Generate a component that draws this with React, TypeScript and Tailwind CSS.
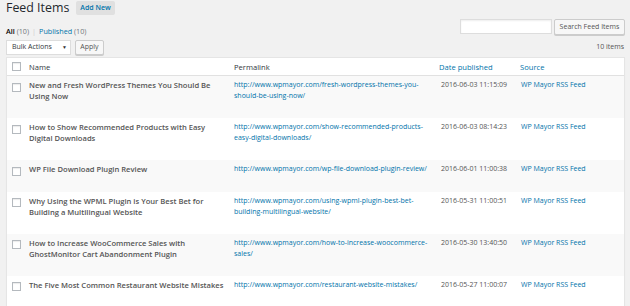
import React from 'react';

interface FeedItem {
  title: string[];
  link: string[];
  date: string;
}

const items: FeedItem[] = [
  {
    title: ['New and Fresh WordPress Themes You Should Be', 'Using Now'],
    link: ['http://www.wpmayor.com/fresh-wordpress-themes-you-', 'should-be-using-now/'],
    date: '2016-06-03 11:15:09',
  },
  {
    title: ['How to Show Recommended Products with Easy', 'Digital Downloads'],
    link: ['http://www.wpmayor.com/show-recommended-products-', 'easy-digital-downloads/'],
    date: '2016-06-03 08:14:23',
  },
  {
    title: ['WP File Download Plugin Review'],
    link: ['http://www.wpmayor.com/wp-file-download-plugin-review/'],
    date: '2016-06-01 11:00:38',
  },
  {
    title: ['Why Using the WPML Plugin is Your Best Bet for', 'Building a Multilingual Website'],
    link: ['http://www.wpmayor.com/using-wpml-plugin-best-bet-', 'building-multilingual-website/'],
    date: '2016-05-31 11:00:51',
  },
  {
    title: ['How to Increase WooCommerce Sales with', 'GhostMonitor Cart Abandonment Plugin'],
    link: ['http://www.wpmayor.com/how-to-increase-woocommerce-', 'sales/'],
    date: '2016-05-30 13:40:50',
  },
  {
    title: ['The Five Most Common Restaurant Website Mistakes'],
    link: ['http://www.wpmayor.com/restaurant-website-mistakes/'],
    date: '2016-05-27 11:00:07',
  },
];

const Checkbox: React.FC = () => (
  <span className="block w-[9px] h-[9px] bg-white border border-[#b4b9be] shadow-[inset_0_1px_1px_rgba(0,0,0,0.08)]" />
);

const Lines: React.FC<{ lines: string[] }> = ({ lines }) => (
  <>
    {lines.map((l, i) => (
      <div key={i} className="whitespace-nowrap">
        {l}
      </div>
    ))}
  </>
);

export default function App() {
  return (
    <div
      className="w-[630px] h-[306px] overflow-hidden bg-[#f1f1f1] pl-[6px] pr-[5px] text-[#444]"
      style={{ fontFamily: '"Open Sans", "Liberation Sans", sans-serif' }}
    >
      {/* Title */}
      <div className="flex items-start h-[19px]">
        <h1 className="text-[12.4px] leading-[16px] font-normal text-[#23282d]">Feed Items</h1>
        <span className="ml-[7px] mt-[1px] h-[14px] px-[4px] flex items-center rounded-[2px] bg-[#e0e0e0] text-[#0073aa] text-[7px] font-semibold">
          Add New
        </span>
      </div>

      {/* Views + search */}
      <div className="flex justify-between items-start h-[21px]">
        <div className="mt-[7px] text-[7.2px] leading-[10px] text-[#555]">
          <span className="font-semibold text-black">All</span> <span className="text-[#72777c]">(10)</span>
          <span className="text-[#ccc] mx-[3px]">|</span>
          <span className="text-[#0073aa]">Published</span> <span className="text-[#72777c]">(10)</span>
        </div>
        <div className="flex items-start">
          <span className="block w-[92px] h-[15px] bg-white border border-[#ddd] shadow-[inset_0_1px_2px_rgba(0,0,0,0.07)]" />
          <span className="ml-[2px] h-[16px] w-[71px] flex items-center justify-center rounded-[2px] bg-[#f7f7f7] border border-[#ccc] shadow-[0_1px_0_#ccc] text-[7px] text-[#555]">
            Search Feed Items
          </span>
        </div>
      </div>

      {/* Bulk actions */}
      <div className="flex items-center h-[15px]">
        <span className="w-[65px] h-[15px] flex items-center justify-between bg-white border border-[#ddd] pl-[5px] pr-[3px] text-[7px] text-[#32373c]">
          Bulk Actions
          <span className="text-[5px] text-[#333]">▼</span>
        </span>
        <span className="ml-[4px] w-[29px] h-[15px] flex items-center justify-center rounded-[2px] bg-[#f7f7f7] border border-[#ccc] shadow-[0_1px_0_#ccc] text-[7px] text-[#555]">
          Apply
        </span>
        <span className="ml-auto mr-[1px] text-[7px] text-[#555]">10 items</span>
      </div>

      {/* Table */}
      <div className="mt-[2px] bg-white border border-[#e5e5e5] shadow-[0_1px_1px_rgba(0,0,0,0.04)]">
        <div className="flex h-[18px] border-b border-[#e1e1e1] text-[7.6px] leading-[10.6px]">
          <div className="w-[16px] pl-[5px] pt-[4px]">
            <Checkbox />
          </div>
          <div className="w-[205px] pl-[6px] pt-[4px] text-[#32373c]">Name</div>
          <div className="w-[205px] pl-[6px] pt-[4px] text-[#32373c]">Permalink</div>
          <div className="w-[81px] pl-[6px] pt-[4px] text-[#0073aa]">Date published</div>
          <div className="flex-1 pl-[6px] pt-[4px] text-[#0073aa]">Source</div>
        </div>

        {items.map((item, i) => (
          <div key={i} className={`flex ${i % 2 === 0 ? 'bg-[#f9f9f9]' : 'bg-white'}`}>
            <div className="w-[16px] pl-[5px] pt-[6.5px]">
              <Checkbox />
            </div>
            <div className="w-[205px] pl-[6px] pt-[4.3px] pb-[4.3px]">
              <div className="text-[7.6px] leading-[10.6px] font-semibold text-[#555]">
                <Lines lines={item.title} />
              </div>
              <div className="h-[12.3px]" />
            </div>
            <div className="w-[205px] pl-[6px] pt-[4.3px] text-[7px] leading-[10.6px] text-[#0073aa]">
              <Lines lines={item.link} />
            </div>
            <div className="w-[81px] pl-[8px] pt-[4.3px] text-[7px] leading-[10.6px] text-[#555] whitespace-nowrap">
              {item.date}
            </div>
            <div className="flex-1 pl-[7px] pt-[4.3px] text-[7px] leading-[10.6px] text-[#0073aa] whitespace-nowrap">
              WP Mayor RSS Feed
            </div>
          </div>
        ))}
      </div>
    </div>
  );
}
